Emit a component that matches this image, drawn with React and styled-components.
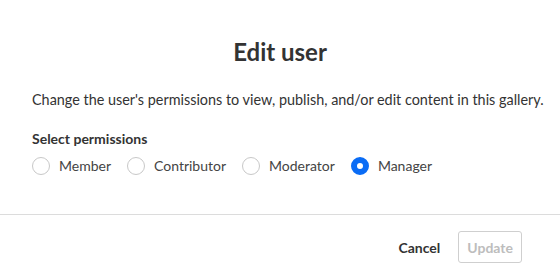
import React, { useState } from 'react';
import styled, { createGlobalStyle } from 'styled-components';

const GlobalStyle = createGlobalStyle`
    html, body {
        margin: 0;
        padding: 0;
        background: #fff;
    }
    body {
        font-family: Lato, "Open Sans", sans-serif;
        color: #333;
    }
`;

const Dialog = styled.div`
    width: 560px;
    height: 276px;
    display: flex;
    flex-flow: column;
    background: #fff;
    overflow: hidden;
`;

const Body = styled.div`
    padding: 0 32px;
`;

const Title = styled.h2`
    margin: 36px 0 0;
    font-size: 24px;
    line-height: 32px;
    font-weight: 700;
    text-align: center;
    color: #333;
`;

const Description = styled.p`
    margin: 22px -24px 0 0;
    font-size: 14.4px;
    line-height: 20px;
    color: #333;
    white-space: nowrap;
`;

const Legend = styled.div`
    margin-top: 19px;
    font-size: 14px;
    line-height: 20px;
    font-weight: 700;
`;

const RadioGroup = styled.div`
    display: flex;
    flex-flow: row;
    gap: 16px;
    margin-top: 7px;
`;

const Option = styled.label`
    display: flex;
    align-items: center;
    gap: 9px;
    font-size: 14px;
    line-height: 20px;
    color: #444;
    cursor: pointer;
`;

const Circle = styled.span`
    box-sizing: border-box;
    width: 18px;
    height: 18px;
    border-radius: 50%;
    border: ${p => (p.checked ? '6px solid #0a6cf5' : '1px solid #c8c8c8')};
    background: #fff;
`;

const Divider = styled.hr`
    margin: 38px 0 0;
    border: 0;
    border-top: 1px solid #dcdcdc;
`;

const Footer = styled.div`
    display: flex;
    justify-content: flex-end;
    align-items: center;
    gap: 18px;
    padding: 16px 38px 0 0;
`;

const TextButton = styled.button`
    border: 0;
    background: none;
    padding: 0;
    font-family: inherit;
    font-size: 14px;
    font-weight: 700;
    color: #333;
`;

const OutlineButton = styled.button`
    height: 32px;
    padding: 0 8px;
    border: 1px solid #cfcfcf;
    border-radius: 3px;
    background: #fff;
    font-family: inherit;
    font-size: 14px;
    font-weight: 700;
    color: #bdbdbd;
`;

const roles = ['Member', 'Contributor', 'Moderator', 'Manager'];

const App = () => {
    const [role, setRole] = useState('Manager');

    return (
        <Dialog>
            <GlobalStyle/>
            <Body>
                <Title>Edit user</Title>
                <Description>
                    Change the user's permissions to view, publish, and/or edit content in this gallery.
                </Description>
                <Legend>Select permissions</Legend>
                <RadioGroup>
                    {roles.map(r => (
                        <Option key={r} onClick={() => setRole(r)}>
                            <Circle checked={r === role}/>
                            {r}
                        </Option>
                    ))}
                </RadioGroup>
            </Body>
            <Divider/>
            <Footer>
                <TextButton>Cancel</TextButton>
                <OutlineButton disabled>Update</OutlineButton>
            </Footer>
        </Dialog>
    );
};

export default App;
